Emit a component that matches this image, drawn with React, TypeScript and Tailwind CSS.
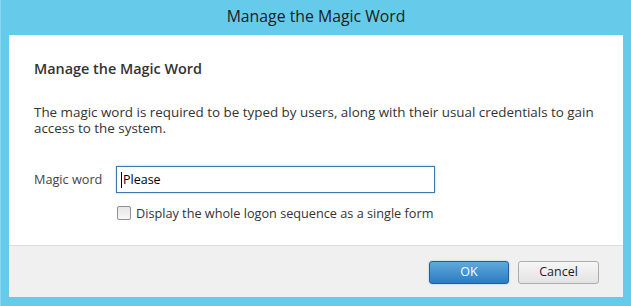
import React from "react";

export default function App() {
  const font = { fontFamily: '"Open Sans", "Noto Sans", Arial, sans-serif' };
  return (
    <div
      className="w-[631px] h-[306px] bg-[#66cbea] flex flex-col px-[8px] pb-[9px] border-l border-[#8bd6ef]"
      style={font}
    >
      <div className="h-[35px] flex items-center justify-center text-[15.8px] text-[#1b1b1b] pb-[1px]">
        Manage the Magic Word
      </div>
      <div className="flex-1 bg-white pl-[25px] pt-[24px] flex flex-col">
        <div className="text-[14.4px] leading-[20px] font-semibold text-[#333333]">
          Manage the Magic Word
        </div>
        <p className="mt-[25px] text-[13.4px] leading-[16px] text-[#333333] w-[578px]">
          The magic word is required to be typed by users, along with their usual credentials to gain access to the system.
        </p>
        <div className="mt-[30px] flex items-center">
          <div className="w-[82px] text-[12.7px] text-[#444444]">Magic word</div>
          <div className="w-[319px] h-[27px] border border-[#3d79ac] shadow-[0_0_2px_#9cc8ec] flex items-center pl-[4px]">
            <span className="border-l border-black h-[16px] flex items-center pl-[1px] text-[12.5px] text-black leading-[16px]">
              Please
            </span>
          </div>
        </div>
        <div className="mt-[12px] ml-[83px] flex items-center">
          <div className="w-[14px] h-[14px] rounded-[2px] border border-[#8e8f8f] bg-gradient-to-b from-[#e6e6e6] to-[#f7f7f7]" />
          <span className="ml-[5px] text-[12.7px] leading-[16px] text-[#333333]">
            Display the whole logon sequence as a single form
          </span>
        </div>
      </div>
      <div className="h-[52px] bg-[#f0f0f0] border-t border-[#dcdcdc] flex justify-end items-start pt-[15px] pr-[24px] gap-[9px]">
        <button className="w-[80px] h-[23px] rounded-[3px] border border-[#235e9a] bg-gradient-to-b from-[#5fa9db] to-[#2a7cc0] text-white text-[12.5px] shadow-[0_0_2px_#8fc3ea]">
          OK
        </button>
        <button className="w-[81px] h-[23px] rounded-[3px] border border-[#acacac] bg-gradient-to-b from-[#f6f6f6] to-[#e3e3e3] text-[#1e1e1e] text-[12.5px]">
          Cancel
        </button>
      </div>
    </div>
  );
}
